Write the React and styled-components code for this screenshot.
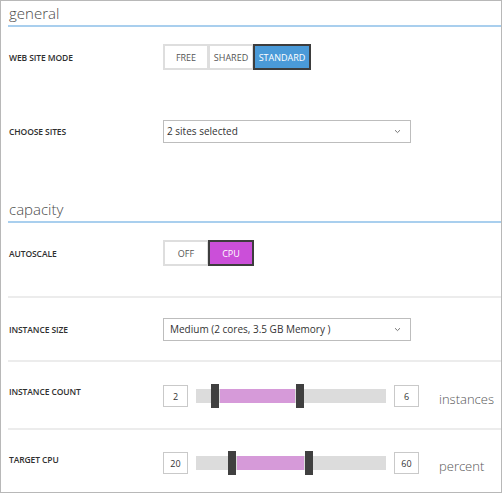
import React from "react";
import styled, { createGlobalStyle } from "styled-components";

const GlobalStyle = createGlobalStyle`
  html, body {
    margin: 0;
    padding: 0;
    background: #ffffff;
  }
  * {
    box-sizing: border-box;
  }
`;

const Frame = styled.div`
  width: 502px;
  height: 493px;
  border: 1px solid #b8b8b8;
  padding-left: 7px;
  font-family: "Open Sans", "Noto Sans", sans-serif;
  color: #333;
  overflow: hidden;
`;

const Heading = styled.div`
  padding-top: ${(p) => p.top}px;
  padding-left: 1px;
  line-height: 23px;
  font-size: 15px;
  font-weight: 300;
  color: #4a4a4a;
  border-bottom: 2px solid #a9cfee;
`;

const Row = styled.div`
  display: flex;
  align-items: center;
  height: ${(p) => p.h}px;
  padding-top: ${(p) => p.pt || 0}px;
  padding-bottom: ${(p) => p.pb || 0}px;
  border-bottom: ${(p) => (p.divider ? "2px solid #ececec" : "none")};
`;

const Label = styled.div`
  width: 155px;
  flex: none;
  padding-left: 1px;
  margin-bottom: ${(p) => p.lift || 0}px;
  font-size: 8.5px;
  font-weight: 600;
  letter-spacing: -0.1px;
  color: #2f2f2f;
  text-transform: uppercase;
`;

const ToggleGroup = styled.div`
  display: flex;
  height: 26px;
`;

const ToggleButton = styled.div`
  width: ${(p) => p.w}px;
  height: 26px;
  display: flex;
  align-items: center;
  justify-content: center;
  font-size: 9px;
  color: ${(p) => (p.active ? "#ffffff" : "#555")};
  background: ${(p) => (p.active ? p.color : "#ffffff")};
  border: 2px solid ${(p) => (p.active ? "#3d3d3d" : "#dedede")};
  margin-left: ${(p) => (p.first ? 0 : -1)}px;
`;

const Select = styled.div`
  width: 248px;
  height: 23px;
  display: flex;
  align-items: center;
  justify-content: space-between;
  padding: 0 9px 0 ${(p) => p.pl}px;
  border: 1px solid #bdbdbd;
  font-size: 10px;
  color: #333;
`;

const Chevron = () => (
  <svg width="7" height="5" viewBox="0 0 7 5">
    <path d="M1 1.2 L3.5 3.6 L6 1.2" fill="none" stroke="#777" strokeWidth="1" />
  </svg>
);

const RangeRow = styled.div`
  display: flex;
  align-items: center;
`;

const ValueBox = styled.div`
  width: 25px;
  height: 22px;
  border: 1px solid #c9c9c9;
  display: flex;
  align-items: center;
  justify-content: center;
  font-size: 9px;
  color: #333;
`;

const Track = styled.div`
  position: relative;
  width: 190px;
  height: 14px;
  margin: 0 8px;
  background: #dcdcdc;
`;

const Fill = styled.div`
  position: absolute;
  top: 0;
  height: 14px;
  background: #d69ad9;
`;

const Handle = styled.div`
  position: absolute;
  top: -5px;
  width: 8px;
  height: 24px;
  background: #404040;
`;

const Unit = styled.div`
  margin-left: 20px;
  padding-top: 5px;
  font-size: 13px;
  font-weight: 300;
  color: #555;
`;

const RangeSlider = ({ min, max, low, high, unit }) => (
  <RangeRow>
    <ValueBox>{min}</ValueBox>
    <Track>
      <Handle style={{ left: low }} />
      <Fill style={{ left: low + 9, width: high - low - 10 }} />
      <Handle style={{ left: high }} />
    </Track>
    <ValueBox>{max}</ValueBox>
    <Unit>{unit}</Unit>
  </RangeRow>
);

export default function App() {
  return (
    <>
      <GlobalStyle />
      <Frame>
        <Heading top={1}>general</Heading>
        <Row h={60}>
          <Label>Web site mode</Label>
          <ToggleGroup>
            <ToggleButton first w={46}>FREE</ToggleButton>
            <ToggleButton w={46}>SHARED</ToggleButton>
            <ToggleButton w={58} active color="#4a9ad8">STANDARD</ToggleButton>
          </ToggleGroup>
        </Row>
        <Row h={88}>
          <Label>Choose sites</Label>
          <Select pl={3}>
            <span>2 sites selected</span>
            <Chevron />
          </Select>
        </Row>
        <Heading top={23}>capacity</Heading>
        <Row h={75} pb={13} divider>
          <Label>Autoscale</Label>
          <ToggleGroup>
            <ToggleButton first w={46}>OFF</ToggleButton>
            <ToggleButton w={46} active color="#cb4fd9">CPU</ToggleButton>
          </ToggleGroup>
        </Row>
        <Row h={64} divider>
          <Label>Instance size</Label>
          <Select pl={6}>
            <span>Medium (2 cores, 3.5 GB Memory )</span>
            <Chevron />
          </Select>
        </Row>
        <Row h={68} pt={2} divider>
          <Label lift={9}>Instance count</Label>
          <RangeSlider min="2" max="6" low={15} high={100} unit="instances" />
        </Row>
        <Row h={62} pt={4}>
          <Label lift={7}>Target CPU</Label>
          <RangeSlider min="20" max="60" low={32} high={109} unit="percent" />
        </Row>
      </Frame>
    </>
  );
}
